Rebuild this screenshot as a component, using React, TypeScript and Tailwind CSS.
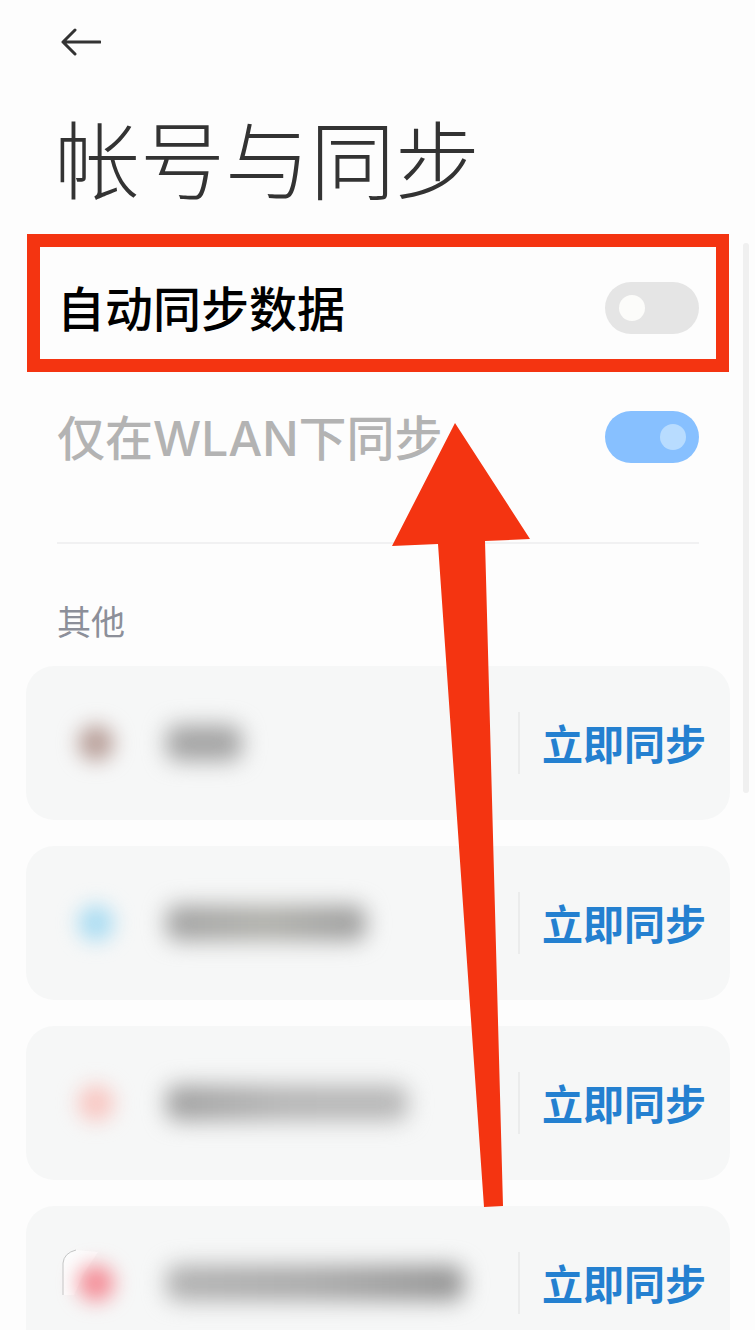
import clsx from 'clsx';

type Account = {
  id: string;
  iconClass: string;
  nameClass: string;
  framed?: boolean;
};

const accounts: Account[] = [
  { id: 'account-1', iconClass: 'bg-[#b89f99]', nameClass: 'w-[76px] bg-[#a4a4a4]' },
  { id: 'account-2', iconClass: 'bg-[#aadcf2]', nameClass: 'w-[200px] bg-linear-to-r from-[#a2a2a2] via-[#b0b0ab] to-[#9e9e9e]' },
  { id: 'account-3', iconClass: 'bg-[#f8c6c1]', nameClass: 'w-[242px] bg-linear-to-r from-[#a0a0a0] via-[#b6b6b6] to-[#b8b8b8]' },
  { id: 'account-4', iconClass: 'bg-[#f48a94]', nameClass: 'w-[298px] bg-linear-to-r from-[#b2b2b2] via-[#a9a9a9] to-[#949494]', framed: true },
];

function BackButton() {
  return (
    <button type="button" aria-label="返回" className="block h-8 w-[42px]">
      <svg viewBox="0 0 42 32" className="h-8 w-[42px]" fill="none" stroke="#333333" strokeWidth="3" strokeLinecap="round" strokeLinejoin="round">
        <path d="M41 16H4M16 4L4 16L16 28" />
      </svg>
    </button>
  );
}

type SwitchProps = {
  id: string;
  defaultChecked?: boolean;
  disabled?: boolean;
};

function Switch({ id, defaultChecked, disabled }: SwitchProps) {
  return (
    <span className="relative block h-[52px] w-[94px] shrink-0">
      <input
        id={id}
        type="checkbox"
        role="switch"
        defaultChecked={defaultChecked}
        disabled={disabled}
        className="peer block h-full w-full appearance-none rounded-full bg-[#e5e5e5] checked:bg-[#87c0ff]"
      />
      <span className="pointer-events-none absolute top-[13px] left-[14px] h-[26px] w-[26px] rounded-full bg-[#fcfcfa] peer-checked:left-[55px] peer-checked:bg-[#b8dcff]" />
    </span>
  );
}

function AccountCard({ account }: { account: Account }) {
  return (
    <li className="flex h-[154px] shrink-0 items-center rounded-[28px] bg-[#f6f7f7] pr-6 pl-9">
      <span className="relative flex h-[68px] w-[68px] shrink-0 items-center justify-center">
        {account.framed && (
          <svg viewBox="0 0 68 68" className="absolute inset-0" fill="none">
            <path d="M1 46V14Q2 4 14 1L36 3L22 24L12 46Z" fill="#ffffff" fillOpacity="0.7" />
            <path d="M1 46V14Q2 4 14 1" stroke="#c4c6c6" />
          </svg>
        )}
        <span className={clsx('relative h-9 w-9 rounded-full blur-[10px]', account.iconClass)} />
      </span>
      <span className="ml-9 min-w-0 flex-1">
        <span className={clsx('block h-9 max-w-full rounded-xl blur-[11px]', account.nameClass)} />
      </span>
      <button type="button" className="relative shrink-0 pt-1 pl-6 text-[41px] leading-[58px] font-bold text-[#2480d0]">
        <span className="absolute inset-y-0 left-0 w-[2px] bg-[#ebecec]" />
        立即同步
      </button>
    </li>
  );
}

// Red arrow that points from the list up to the highlighted row
function PointerArrow() {
  return (
    <svg viewBox="0 0 138 784" className="pointer-events-none absolute top-[423px] left-[392px] h-[784px] w-[138px]">
      <path d="M63 0L138 116L93 118L111 783L92 784L46 121L0 123Z" fill="#f43411" />
    </svg>
  );
}

export default function App() {
  return (
    <div className="relative h-screen overflow-hidden bg-[#fdfdfd] font-['Inter','Noto_Sans_CJK_SC',sans-serif]">
      <header className="px-[59px] pt-[26px]">
        <BackButton />
        <h1 className="mt-[43px] -ml-1 text-[85px] leading-[124px] font-light text-[#333333]">帐号与同步</h1>
      </header>

      <section className="mt-[18px] pr-14 pl-[57px]">
        <div className="relative flex h-[129px] items-center justify-between">
          <label htmlFor="auto-sync" className="pt-1 text-[48px] leading-[72px] font-medium text-black">自动同步数据</label>
          <Switch id="auto-sync" />
          <span className="pointer-events-none absolute -top-[9px] -right-[30px] -left-[30px] h-[138px] border-[13px] border-[#f43411]" />
        </div>
        <div className="flex h-[129px] items-center justify-between">
          <label htmlFor="wlan-sync" className="pt-1 text-[48px] leading-[72px] font-medium text-[#b3b3b3]">仅在WLAN下同步</label>
          <Switch id="wlan-sync" defaultChecked disabled />
        </div>
        <hr className="mt-[41px] border-t-2 border-[#f1f1f2]" />
      </section>

      <section className="pr-[25px] pl-[26px]">
        <h2 className="mt-[54px] pl-[31px] text-[34px] leading-[50px] text-[#8c8f99]">其他</h2>
        <ul className="mt-[18px] flex flex-col gap-[26px]">
          {accounts.map((account) => (
            <AccountCard key={account.id} account={account} />
          ))}
        </ul>
      </section>

      <span className="absolute top-[243px] right-[6px] h-[550px] w-[6px] rounded-full bg-[#f0f0f0]" />
      <PointerArrow />
    </div>
  );
}
